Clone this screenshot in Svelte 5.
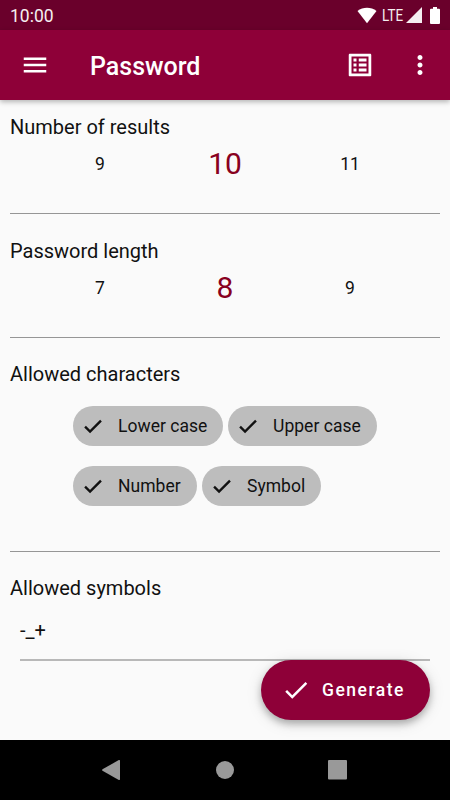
<script>
  const pickers = [
    { title: 'Number of results', values: [9, 10, 11] },
    { title: 'Password length', values: [7, 8, 9] }
  ];
  const chipRows = [
    ['Lower case', 'Upper case'],
    ['Number', 'Symbol']
  ];
  const widths = { 'Lower case': 150, 'Upper case': 149, Number: 124, Symbol: 119 };
  let symbols = '-_+';
</script>

<div class="screen">
  <div class="status">
    <span class="clock">10:00</span>
    <svg class="wifi" width="20" height="17" viewBox="0 0 20 17"><path d="M.5 4.1C6-.3 14-.3 19.500 4.100L10 16.200Z" fill="#fff" /></svg>
    <span class="lte">LTE</span>
    <svg class="signal" width="16" height="16" viewBox="0 0 16 16"><path d="M0 16L16 0V16Z" fill="#f5eff1" /></svg>
    <svg class="battery" width="10" height="17" viewBox="0 0 10 17"><path d="M3 0H7V1.700H9Q10 1.700 10 2.700V16Q10 17 9 17H1Q0 17 0 16V2.700Q0 1.700 1 1.700H3Z" fill="#fff" /></svg>
  </div>

  <header>
    <svg class="menu" width="30" height="30" viewBox="0 0 24 24"><path d="M3 18h18v-2H3v2zm0-5h18v-2H3v2zm0-7v2h18V6H3z" fill="#fff" /></svg>
    <h1>Password</h1>
    <svg class="list" width="30" height="30" viewBox="0 0 24 24"><path d="M18.800 5.200v13.600H5.200V5.200h13.600m1.300-2.200H3.900c-.5 0-.9.4-.9.900v16.200c0 .4.4.9.900.9h16.200c.4 0 .9-.5.900-.9V3.900c0-.5-.5-.9-.9-.9zM11 6.800h6.200v2.400H11zm0 4h6.200v2.400H11zm0 4h6.200v2.400H11zM6.800 6.800h2.400v2.400H6.800zm0 4h2.400v2.400H6.800zm0 4h2.400v2.400H6.800z" fill="#fff" /></svg>
    <svg class="more" width="30" height="30" viewBox="0 0 24 24"><path d="M12 8c1.100 0 2-.9 2-2s-.9-2-2-2-2 .9-2 2 .9 2 2 2zm0 2c-1.100 0-2 .9-2 2s.9 2 2 2 2-.9 2-2-.9-2-2-2zm0 6c-1.100 0-2 .9-2 2s.9 2 2 2 2-.9 2-2-.9-2-2-2z" fill="#fff" /></svg>
  </header>

  <main>
    {#each pickers as picker}
      <section class="picker">
        <h2>{picker.title}</h2>
        <div class="values">
          {#each picker.values as value, i}
            <span class:selected={i === 1}>{value}</span>
          {/each}
        </div>
      </section>
    {/each}

    <section class="characters">
      <h2>Allowed characters</h2>
      <div class="chips">
        {#each chipRows as row}
          <div class="row">
            {#each row as chip}
              <button class="chip" style:width="{widths[chip]}px">
                <svg width="23" height="23" viewBox="0 0 24 24"><path d="M3.200 12.200L8.400 17.300L19.800 5.900" fill="none" stroke="#111" stroke-width="2.500" /></svg>
                <span>{chip}</span>
              </button>
            {/each}
          </div>
        {/each}
      </div>
    </section>

    <section class="symbols">
      <h2>Allowed symbols</h2>
      <div class="field">{symbols}</div>
    </section>

    <button class="fab">
      <svg width="30" height="30" viewBox="0 0 24 24"><path d="M9 16.170L4.830 12l-1.420 1.410L9 19 21 7l-1.410-1.410z" fill="#fff" /></svg>
      <span>Generate</span>
    </button>
  </main>

  <nav>
    <svg width="18" height="20" viewBox="0 0 18 20"><path d="M.5 9.200L16.800.1Q18-.3 18 .8V19.200Q18 20.300 16.800 19.900L.5 10.800Q-.3 10 .5 9.200Z" fill="#999" /></svg>
    <svg class="home" width="18" height="18" viewBox="0 0 18 18"><circle cx="9" cy="9" r="9" fill="#999" /></svg>
    <svg width="19" height="20" viewBox="0 0 19 20"><rect width="19" height="19.500" rx="1" fill="#999" /></svg>
  </nav>
</div>

<style>
  :global(body) { margin: 0; }
  .screen {
    width: 450px;
    height: 800px;
    display: flex;
    flex-direction: column;
    background: #fafafa;
    color: #111;
    font-family: Roboto, sans-serif;
    overflow: hidden;
  }
  .status {
    height: 30px;
    flex: none;
    box-sizing: border-box;
    display: flex;
    align-items: center;
    padding: 0 10px;
    background: #6a002b;
    color: #f5eff1;
  }
  .clock { font-size: 17.500px; letter-spacing: 0; flex: 1; line-height: 30px; padding-top: 1px; }
  .lte { font-size: 17px; width: 22px; margin: 0 2px 0 5px; transform: scaleX(0.790); transform-origin: left center; white-space: nowrap; }
  .signal { margin: 0 8px 0 0; }
  header {
    height: 70px;
    flex: none;
    box-sizing: border-box;
    display: flex;
    align-items: center;
    padding: 0 15px 0 20px;
    background: #8e0038;
    color: #fff;
    z-index: 1;
    box-shadow: 0 2px 5px rgba(0, 0, 0, 0.280);
  }
  h1 { margin: 3px 0 0 40px; font-size: 25px; font-weight: 500; flex: 1; letter-spacing: 0; }
  .list { margin-right: 30px; }
  main { flex: 1; position: relative; padding: 0 10px; }
  section { box-sizing: border-box; }
  h2 { margin: 0; font-size: 20px; line-height: 24px; font-weight: 400; letter-spacing: 0; }
  .picker { height: 124px; border-bottom: 1px solid #969696; padding-top: 25px; }
  .picker:first-child { height: 114px; padding-top: 15px; }
  .values { display: flex; padding: 0 27px 0 27.500px; height: 50px; align-items: center; font-size: 17.500px; }
  .values span { width: 125px; text-align: center; line-height: 50px; }
  .values .selected { font-size: 30px; color: #880020; }
  .characters { height: 214px; padding-top: 24px; border-bottom: 1px solid #969696; }
  .chips { display: flex; flex-direction: column; gap: 20px; padding: 20px 0 0 63px; }
  .row { display: flex; gap: 5px; }
  button { font: inherit; border: 0; color: inherit; display: flex; align-items: center; }
  .chip { height: 40px; padding: 0 0 0 9px; border-radius: 20px; background: #bdbdbd; font-size: 17.500px; letter-spacing: 0.030px; white-space: nowrap; }
  .chip span { margin-left: 13px; }
  .symbols { padding-top: 24px; }
  .field { height: 61px; margin: 0 10px; box-sizing: border-box; border-bottom: 2px solid #b8b8b8; font-size: 20px; line-height: 60px; }
  .fab {
    position: absolute;
    right: 20px;
    bottom: 20px;
    width: 169px;
    height: 60px;
    padding: 0 0 0 20px;
    border-radius: 30px;
    background: #8e0038;
    color: #fff;
    font-size: 17.500px;
    font-weight: 500;
    letter-spacing: 1.500px;
    box-shadow: 0 4px 7px rgba(0, 0, 0, 0.250), 0 3px 16px rgba(0, 0, 0, 0.130);
  }
  .fab span { margin-left: 11px; }
  nav { height: 60px; flex: none; box-sizing: border-box; background: #000; display: flex; align-items: center; justify-content: space-between; padding: 0 103px 0 102px; }
  .home { margin-left: 2px; }
</style>
